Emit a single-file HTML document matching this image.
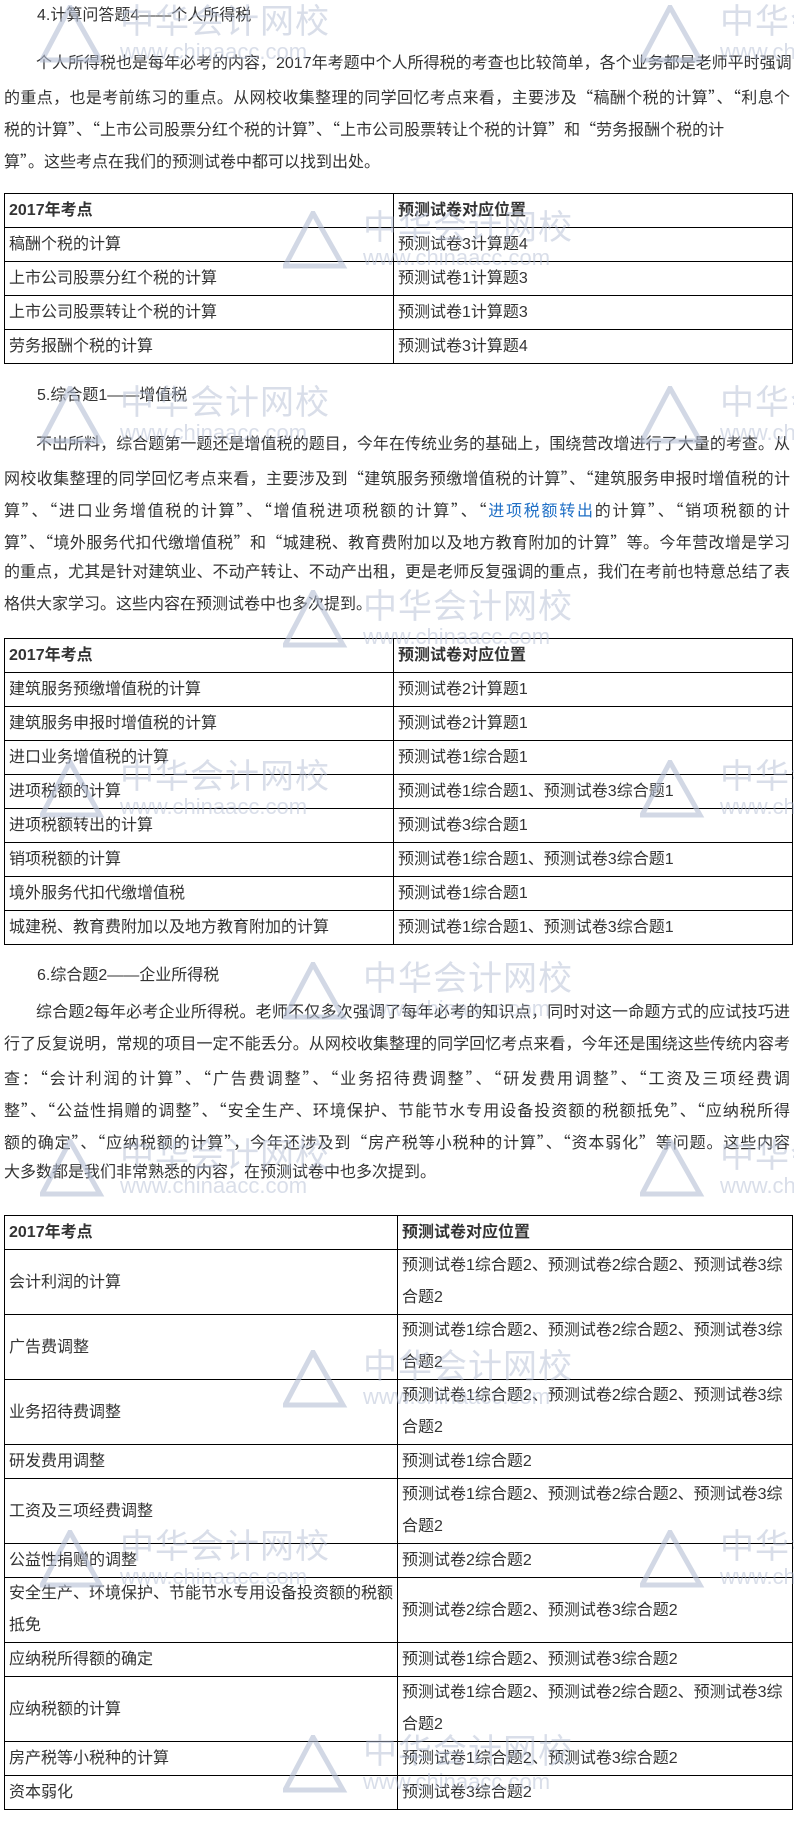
<!DOCTYPE html>
<html><head><meta charset="utf-8"><style>
html,body{margin:0;padding:0;background:#fff;overflow:hidden;}
body{width:794px;height:1832px;position:relative;overflow:hidden;font-family:"Liberation Sans","Noto Sans CJK SC",sans-serif;font-size:16px;color:#333;}
#wrap{position:absolute;left:0;top:0;width:794px;height:1832px;overflow:hidden;}
.b{position:absolute;left:4px;width:786px;}
.t{line-height:32px;padding-left:33px;}
.p div{line-height:32px;height:32px;white-space:nowrap;text-align:justify;text-align-last:justify;}
.p div.l{text-align:left;text-align-last:left;}
.p div.i{padding-left:32px;}
.q{font-family:"Noto Sans CJK SC",sans-serif;}
table{position:absolute;left:4px;width:789px;border-collapse:collapse;}
td{border:1px solid #000;padding:0 4px;line-height:33px;vertical-align:middle;white-space:nowrap;}
td.c1{width:380px;}
td.two{line-height:32px;}
th{border:1px solid #000;padding:0 4px;line-height:33px;text-align:left;font-weight:bold;}
a{color:#1f6fc5;text-decoration:none;}
.wm{position:absolute;color:rgba(180,190,212,0.5);pointer-events:none;z-index:5;}
.wm .a{font-size:34px;line-height:34px;letter-spacing:1px;white-space:nowrap;}
.wm .w{font-size:22px;line-height:22px;margin-top:2px;white-space:nowrap;}
.wm svg{position:absolute;left:-80px;top:0;}
</style></head><body><div id="wrap">

<div class="b t" style="top:0">4.计算问答题4——个人所得税</div>
<div class="b p" style="top:48px">
<div class="i">个人所得税也是每年必考的内容，2017年考题中个人所得税的考查也比较简单，各个业务都是老师平时强调</div>
<div>的重点，也是考前练习的重点。从网校收集整理的同学回忆考点来看，主要涉及<span class="q">“</span>稿酬个税的计算<span class="q">”、“</span>利息个</div>
<div class="l">税的计算<span class="q">”、“</span>上市公司股票分红个税的计算<span class="q">”、“</span>上市公司股票转让个税的计算<span class="q">”</span>和<span class="q">“</span>劳务报酬个税的计</div>
<div class="l">算<span class="q">”</span>。这些考点在我们的预测试卷中都可以找到出处。</div>
</div>
<table style="top:193px">
<tr><th style="width:380px">2017年考点</th><th>预测试卷对应位置</th></tr>
<tr><td class="c1">稿酬个税的计算</td><td>预测试卷3计算题4</td></tr>
<tr><td class="c1">上市公司股票分红个税的计算</td><td>预测试卷1计算题3</td></tr>
<tr><td class="c1">上市公司股票转让个税的计算</td><td>预测试卷1计算题3</td></tr>
<tr><td class="c1">劳务报酬个税的计算</td><td>预测试卷3计算题4</td></tr>
</table>

<div class="b t" style="top:380px">5.综合题1——增值税</div>
<div class="b p" style="top:429px">
<div class="i">不出所料，综合题第一题还是增值税的题目，今年在传统业务的基础上，围绕营改增进行了大量的考查。从</div>
<div>网校收集整理的同学回忆考点来看，主要涉及到<span class="q">“</span>建筑服务预缴增值税的计算<span class="q">”、“</span>建筑服务申报时增值税的计</div>
<div>算<span class="q">”、“</span>进口业务增值税的计算<span class="q">”、“</span>增值税进项税额的计算<span class="q">”、“</span><a>进项税额转出</a>的计算<span class="q">”、“</span>销项税额的计</div>
<div>算<span class="q">”、“</span>境外服务代扣代缴增值税<span class="q">”</span>和<span class="q">“</span>城建税、教育费附加以及地方教育附加的计算<span class="q">”</span>等。今年营改增是学习</div>
<div>的重点，尤其是针对建筑业、不动产转让、不动产出租，更是老师反复强调的重点，我们在考前也特意总结了表</div>
<div class="l">格供大家学习。这些内容在预测试卷中也多次提到。</div>
</div>
<table style="top:638px">
<tr><th style="width:380px">2017年考点</th><th>预测试卷对应位置</th></tr>
<tr><td class="c1">建筑服务预缴增值税的计算</td><td>预测试卷2计算题1</td></tr>
<tr><td class="c1">建筑服务申报时增值税的计算</td><td>预测试卷2计算题1</td></tr>
<tr><td class="c1">进口业务增值税的计算</td><td>预测试卷1综合题1</td></tr>
<tr><td class="c1">进项税额的计算</td><td>预测试卷1综合题1、预测试卷3综合题1</td></tr>
<tr><td class="c1">进项税额转出的计算</td><td>预测试卷3综合题1</td></tr>
<tr><td class="c1">销项税额的计算</td><td>预测试卷1综合题1、预测试卷3综合题1</td></tr>
<tr><td class="c1">境外服务代扣代缴增值税</td><td>预测试卷1综合题1</td></tr>
<tr><td class="c1">城建税、教育费附加以及地方教育附加的计算</td><td>预测试卷1综合题1、预测试卷3综合题1</td></tr>
</table>

<div class="b t" style="top:960px">6.综合题2——企业所得税</div>
<div class="b p" style="top:997px">
<div class="i">综合题2每年必考企业所得税。老师不仅多次强调了每年必考的知识点，同时对这一命题方式的应试技巧进</div>
<div>行了反复说明，常规的项目一定不能丢分。从网校收集整理的同学回忆考点来看，今年还是围绕这些传统内容考</div>
<div>查：<span class="q">“</span>会计利润的计算<span class="q">”、“</span>广告费调整<span class="q">”、“</span>业务招待费调整<span class="q">”、“</span>研发费用调整<span class="q">”、“</span>工资及三项经费调</div>
<div>整<span class="q">”、“</span>公益性捐赠的调整<span class="q">”、“</span>安全生产、环境保护、节能节水专用设备投资额的税额抵免<span class="q">”、“</span>应纳税所得</div>
<div>额的确定<span class="q">”、“</span>应纳税额的计算<span class="q">”</span>，今年还涉及到<span class="q">“</span>房产税等小税种的计算<span class="q">”、“</span>资本弱化<span class="q">”</span>等问题。这些内容</div>
<div class="l">大多数都是我们非常熟悉的内容，在预测试卷中也多次提到。</div>
</div>
<table style="top:1215px">
<tr><th style="width:380px">2017年考点</th><th>预测试卷对应位置</th></tr>
<tr><td class="c1">会计利润的计算</td><td class="two">预测试卷1综合题2、预测试卷2综合题2、预测试卷3综<br>合题2</td></tr>
<tr><td class="c1">广告费调整</td><td class="two">预测试卷1综合题2、预测试卷2综合题2、预测试卷3综<br>合题2</td></tr>
<tr><td class="c1">业务招待费调整</td><td class="two">预测试卷1综合题2、预测试卷2综合题2、预测试卷3综<br>合题2</td></tr>
<tr><td class="c1">研发费用调整</td><td>预测试卷1综合题2</td></tr>
<tr><td class="c1">工资及三项经费调整</td><td class="two">预测试卷1综合题2、预测试卷2综合题2、预测试卷3综<br>合题2</td></tr>
<tr><td class="c1">公益性捐赠的调整</td><td>预测试卷2综合题2</td></tr>
<tr><td class="c1 two">安全生产、环境保护、节能节水专用设备投资额的税额<br>抵免</td><td>预测试卷2综合题2、预测试卷3综合题2</td></tr>
<tr><td class="c1">应纳税所得额的确定</td><td>预测试卷1综合题2、预测试卷3综合题2</td></tr>
<tr><td class="c1">应纳税额的计算</td><td class="two">预测试卷1综合题2、预测试卷2综合题2、预测试卷3综<br>合题2</td></tr>
<tr><td class="c1">房产税等小税种的计算</td><td>预测试卷1综合题2、预测试卷3综合题2</td></tr>
<tr><td class="c1">资本弱化</td><td>预测试卷3综合题2</td></tr>
</table>

<div class="wm" style="left:120px;top:5px"><svg width="75" height="65" viewBox="0 0 75 65"><path d="M30 2 L2 55 L60 55 Z" fill="none" stroke="rgba(180,190,212,.6)" stroke-width="5"/></svg><div class="a">中华会计网校</div><div class="w">www.chinaacc.com</div></div>
<div class="wm" style="left:720px;top:5px"><svg width="75" height="65" viewBox="0 0 75 65"><path d="M30 2 L2 55 L60 55 Z" fill="none" stroke="rgba(180,190,212,.6)" stroke-width="5"/></svg><div class="a">中华会计网校</div><div class="w">www.chinaacc.com</div></div>
<div class="wm" style="left:363px;top:211px"><svg width="75" height="65" viewBox="0 0 75 65"><path d="M30 2 L2 55 L60 55 Z" fill="none" stroke="rgba(180,190,212,.6)" stroke-width="5"/></svg><div class="a">中华会计网校</div><div class="w">www.chinaacc.com</div></div>
<div class="wm" style="left:120px;top:386px"><svg width="75" height="65" viewBox="0 0 75 65"><path d="M30 2 L2 55 L60 55 Z" fill="none" stroke="rgba(180,190,212,.6)" stroke-width="5"/></svg><div class="a">中华会计网校</div><div class="w">www.chinaacc.com</div></div>
<div class="wm" style="left:720px;top:386px"><svg width="75" height="65" viewBox="0 0 75 65"><path d="M30 2 L2 55 L60 55 Z" fill="none" stroke="rgba(180,190,212,.6)" stroke-width="5"/></svg><div class="a">中华会计网校</div><div class="w">www.chinaacc.com</div></div>
<div class="wm" style="left:363px;top:590px"><svg width="75" height="65" viewBox="0 0 75 65"><path d="M30 2 L2 55 L60 55 Z" fill="none" stroke="rgba(180,190,212,.6)" stroke-width="5"/></svg><div class="a">中华会计网校</div><div class="w">www.chinaacc.com</div></div>
<div class="wm" style="left:120px;top:760px"><svg width="75" height="65" viewBox="0 0 75 65"><path d="M30 2 L2 55 L60 55 Z" fill="none" stroke="rgba(180,190,212,.6)" stroke-width="5"/></svg><div class="a">中华会计网校</div><div class="w">www.chinaacc.com</div></div>
<div class="wm" style="left:720px;top:760px"><svg width="75" height="65" viewBox="0 0 75 65"><path d="M30 2 L2 55 L60 55 Z" fill="none" stroke="rgba(180,190,212,.6)" stroke-width="5"/></svg><div class="a">中华会计网校</div><div class="w">www.chinaacc.com</div></div>
<div class="wm" style="left:363px;top:962px"><svg width="75" height="65" viewBox="0 0 75 65"><path d="M30 2 L2 55 L60 55 Z" fill="none" stroke="rgba(180,190,212,.6)" stroke-width="5"/></svg><div class="a">中华会计网校</div><div class="w">www.chinaacc.com</div></div>
<div class="wm" style="left:120px;top:1139px"><svg width="75" height="65" viewBox="0 0 75 65"><path d="M30 2 L2 55 L60 55 Z" fill="none" stroke="rgba(180,190,212,.6)" stroke-width="5"/></svg><div class="a">中华会计网校</div><div class="w">www.chinaacc.com</div></div>
<div class="wm" style="left:720px;top:1139px"><svg width="75" height="65" viewBox="0 0 75 65"><path d="M30 2 L2 55 L60 55 Z" fill="none" stroke="rgba(180,190,212,.6)" stroke-width="5"/></svg><div class="a">中华会计网校</div><div class="w">www.chinaacc.com</div></div>
<div class="wm" style="left:363px;top:1350px"><svg width="75" height="65" viewBox="0 0 75 65"><path d="M30 2 L2 55 L60 55 Z" fill="none" stroke="rgba(180,190,212,.6)" stroke-width="5"/></svg><div class="a">中华会计网校</div><div class="w">www.chinaacc.com</div></div>
<div class="wm" style="left:120px;top:1530px"><svg width="75" height="65" viewBox="0 0 75 65"><path d="M30 2 L2 55 L60 55 Z" fill="none" stroke="rgba(180,190,212,.6)" stroke-width="5"/></svg><div class="a">中华会计网校</div><div class="w">www.chinaacc.com</div></div>
<div class="wm" style="left:720px;top:1530px"><svg width="75" height="65" viewBox="0 0 75 65"><path d="M30 2 L2 55 L60 55 Z" fill="none" stroke="rgba(180,190,212,.6)" stroke-width="5"/></svg><div class="a">中华会计网校</div><div class="w">www.chinaacc.com</div></div>
<div class="wm" style="left:363px;top:1735px"><svg width="75" height="65" viewBox="0 0 75 65"><path d="M30 2 L2 55 L60 55 Z" fill="none" stroke="rgba(180,190,212,.6)" stroke-width="5"/></svg><div class="a">中华会计网校</div><div class="w">www.chinaacc.com</div></div>
</div></body></html>
